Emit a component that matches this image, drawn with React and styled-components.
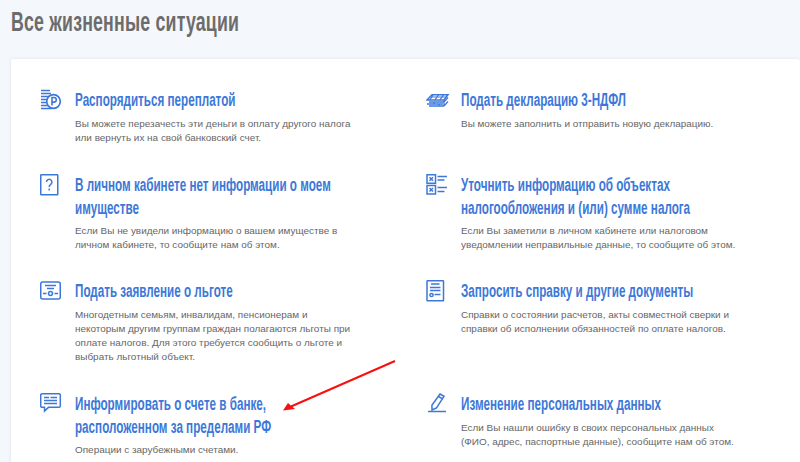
import React from 'react';
import styled, { createGlobalStyle } from 'styled-components';

const GlobalStyle = createGlobalStyle`
  html, body { margin: 0; height: 100%; }
  body {
    background: #f4f7fb;
    font-family: 'Liberation Sans', Arial, sans-serif;
    overflow: hidden;
  }
`;

const BLUE = '#3d78d8';

const Icon = ({ children }) => (
  <svg width="32" height="32" viewBox="0 0 32 32" fill="none" stroke={BLUE} strokeWidth="1.5">
    {children}
  </svg>
);

const icons = {
  money: (
    <Icon>
      <path d="M1 1.500h9M1 4.500h10M1 7.500h9M1 10.500h6M1 13.500h5M1 16.500h7M1 19.500h11" />
      <circle cx="13.500" cy="12.500" r="6.800" fill="#fff" strokeWidth="1.700" />
      <path d="M12 16.500v-8h2a2.300 2.300 0 0 1 0 4.600h-2" strokeWidth="1.600" />
    </Icon>
  ),
  question: (
    <Icon>
      <rect x="0.750" y="0.750" width="17" height="20" rx="0.500" />
      <path d="M6.500 8a2.700 2.700 0 1 1 4.200 2.300c-1 .7-1.500 1.200-1.500 2.700M9.200 14.500v2" />
    </Icon>
  ),
  wall: (
    <Icon>
      <path d="M6 5.700h16l-4 5.300H1zM3 13h15M1 15h16M3 17h15" />
      <path d="M4.500 8h16M7 5.700l-3 5.300M12.500 5.700l-3.500 5.300M17.500 5.700l-3.500 5.300M18 11v6M18 17l4-4.500M18 13l4-4.500M8 13v2M13 15v2" strokeWidth="1.200" />
    </Icon>
  ),
  check: (
    <Icon>
      <rect x="1" y="0.750" width="8.500" height="8.500" />
      <rect x="1" y="11.500" width="8.500" height="8.500" />
      <path d="M3.500 3.200l3.500 3.500M7 3.200L3.500 6.700M3.500 14l3.500 3.500M7 14l-3.500 3.500" />
      <path d="M11.500 2.500h9.500M11.500 6h7M11.500 13.500h9.500M11.500 17.500h7" />
    </Icon>
  ),
  benefit: (
    <Icon>
      <rect x="0.750" y="2" width="19.500" height="17" rx="2" />
      <path d="M5 5.500h11M7 8.500h7M3 13.500h3.500M14.500 13.500h3.500" />
      <circle cx="10.500" cy="13.500" r="2" />
    </Icon>
  ),
  doc: (
    <Icon>
      <rect x="1" y="0.750" width="16.500" height="20" rx="0.500" />
      <path d="M5 4h8.500M4 7.500h10.500M4 10.500h10.500M8.500 14.500h6" />
      <circle cx="5.500" cy="15" r="1.600" />
    </Icon>
  ),
  chat: (
    <Icon>
      <path d="M2 0.750h17a1.300 1.300 0 0 1 1.300 1.300v11a1.300 1.300 0 0 1-1.300 1.300H8.500L4.500 18v-3.650H2A1.300 1.300 0 0 1 .700 13V2A1.300 1.300 0 0 1 2 .750z" />
      <path d="M4 4.500h5M10.500 4.500h6.500M4 7.500h13M4 10.500h13" />
    </Icon>
  ),
  pen: (
    <Icon>
      <path d="M14 1l4 2.300-7.500 11.500-4.500 2.200-.1-4.800z" />
      <path d="M12.500 3.500l4 2.400" />
      <path d="M2 18.500h18" />
    </Icon>
  ),
};

const items = [
  { icon: 'money', title: ['Распорядиться переплатой'], text: ['Вы можете перезачесть эти деньги в оплату другого налога', 'или вернуть их на свой банковский счет.'] },
  { icon: 'wall', title: ['Подать декларацию 3-НДФЛ'], text: ['Вы можете заполнить и отправить новую декларацию.'] },
  { icon: 'question', title: ['В личном кабинете нет информации о моем', 'имуществе'], text: ['Если Вы не увидели информацию о вашем имуществе в', 'личном кабинете, то сообщите нам об этом.'] },
  { icon: 'check', title: ['Уточнить информацию об объектах', 'налогообложения и (или) сумме налога'], text: ['Если Вы заметили в личном кабинете или налоговом', 'уведомлении неправильные данные, то сообщите об этом.'] },
  { icon: 'benefit', title: ['Подать заявление о льготе'], text: ['Многодетным семьям, инвалидам, пенсионерам и', 'некоторым другим группам граждан полагаются льготы при', 'оплате налогов. Для этого требуется сообщить о льготе и', 'выбрать льготный объект.'] },
  { icon: 'doc', title: ['Запросить справку и другие документы'], text: ['Справки о состоянии расчетов, акты совместной сверки и', 'справки об исполнении обязанностей по оплате налогов.'] },
  { icon: 'chat', title: ['Информировать о счете в банке,', 'расположенном за пределами РФ'], text: ['Операции с зарубежными счетами.'] },
  { icon: 'pen', title: ['Изменение персональных данных'], text: ['Если Вы нашли ошибку в своих персональных данных', '(ФИО, адрес, паспортные данные), сообщите нам об этом.'] },
];

const App = () => (
  <>
    <GlobalStyle />
    <Page>
      <Heading>Все жизненные ситуации</Heading>
      <Card>
        <Grid>
          {items.map((item) => (
            <Item key={item.icon}>
              <IconBox>{icons[item.icon]}</IconBox>
              <div>
                {item.title.map((line) => (
                  <TitleLine key={line}>{line}</TitleLine>
                ))}
                <Text $tight={item.title.length > 1}>
                  {item.text.map((line) => (
                    <TextLine key={line}>{line}</TextLine>
                  ))}
                </Text>
              </div>
            </Item>
          ))}
        </Grid>
        <Arrow viewBox="0 0 120 60" width="120" height="60">
          <path d="M113 2L9 47.500" stroke="#f80f0f" strokeWidth="2" />
          <path d="M1 51.500L6 44l7 6z" fill="#f80f0f" />
        </Arrow>
      </Card>
    </Page>
  </>
);

const Page = styled.div`
  padding-left: 11px;
  height: 462px;
  overflow: hidden;
`;

const Heading = styled.h1`
  margin: 0;
  height: 59px;
  padding-top: 8px;
  box-sizing: border-box;
  font-size: 27px;
  line-height: 28px;
  font-weight: 700;
  color: #6c6c6c;
  letter-spacing: 0.3px;
  transform: scaleX(0.657);
  transform-origin: left top;
  width: 600px;
  white-space: nowrap;
`;

const Card = styled.div`
  position: relative;
  background: #fff;
  box-shadow: 0 0 3px rgba(60, 80, 110, 0.12);
  border-radius: 2px;
  padding: 30px 0 0 29px;
  height: 420px;
`;

const Grid = styled.div`
  display: grid;
  grid-template-columns: 386px 1fr;
  row-gap: 28.500px;
`;

const Item = styled.div`
  display: flex;
`;

const IconBox = styled.div`
  flex: 0 0 35px;
  width: 35px;
  height: 32px;
`;

const TitleLine = styled.div`
  font-size: 18px;
  line-height: 23px;
  font-weight: 700;
  color: ${BLUE};
  white-space: nowrap;
  transform: scaleX(0.648);
  transform-origin: left center;
`;

const Text = styled.div`
  margin-top: ${(p) => (p.$tight ? '4px' : '5px')};
`;

const TextLine = styled.div`
  font-size: 9.950px;
  line-height: 14px;
  color: #666;
  white-space: nowrap;
`;

const Arrow = styled.svg`
  position: absolute;
  left: 271px;
  top: 300px;
`;

export default App;
